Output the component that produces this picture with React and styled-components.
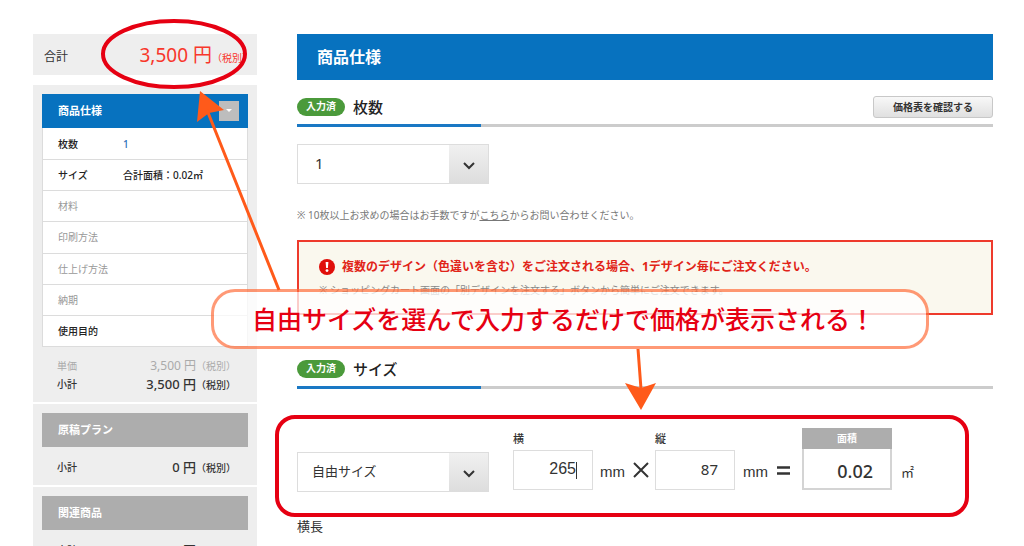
import React from "react";
import styled, { createGlobalStyle, css } from "styled-components";

const GlobalStyle = createGlobalStyle`
  *, *::before, *::after { box-sizing: border-box; }
  html { scrollbar-width: none; }
  body {
    margin: 0;
    background: #fff;
    color: #333;
    font-family: "Noto Sans", "Noto Sans CJK JP", sans-serif;
    font-size: 12px;
    line-height: 18px;
    overflow-x: hidden;
  }
  h1, h2, h3, p, dl, dd, dt { margin: 0; font-size: inherit; font-weight: inherit; }
  button, input, select { font-family: inherit; color: inherit; }
`;

const Page = styled.div`
  position: relative;
  display: grid;
  grid-template-columns: 224px minmax(0, 1fr);
  align-items: start;
  gap: 40px;
  padding: 34px 31px 0 33px;
`;

const Sidebar = styled.aside`
  display: flex;
  flex-direction: column;
  gap: 2px;
`;

const TotalBar = styled.div`
  display: flex;
  align-items: center;
  justify-content: space-between;
  height: 41px;
  margin-bottom: 8px;
  padding: 4px 5px 0 11px;
  background: #eeeeee;
`;

const TotalPrice = styled.span`
  color: #f8372b;
  font-size: 19px;
  line-height: 24px;
`;

const Tax = styled.small`
  font-size: 10px;
`;

const Panel = styled.section`
  padding: 9px;
  background: #eeeeee;
`;

const PanelHead = styled.h2`
  display: flex;
  align-items: center;
  justify-content: space-between;
  height: 34px;
  padding: 0 9px 0 16px;
  color: #fff;
  font-size: 11px;
  font-weight: 700;
  background: ${(p) => (p.$active ? "#0772bf" : "#adadad")};
`;

const Toggle = styled.button`
  display: grid;
  place-items: center;
  width: 20px;
  height: 20px;
  padding: 0;
  border: 0;
  background: #bdbdbd;
`;

const SpecTable = styled.dl`
  display: grid;
  grid-auto-rows: 1fr;
  min-height: 219px;
  border: 1px solid #dcdcdc;
  border-top: 0;
  background: #fff;
`;

const SpecRow = styled.div`
  display: grid;
  grid-template-columns: 65px 1fr;
  align-items: center;
  padding-left: 15px;
  font-size: 10px;
  font-weight: ${(p) => (p.$muted ? 400 : 500)};
  color: ${(p) => (p.$muted ? "#999" : "#222")};
  & + & { border-top: 1px solid #dcdcdc; }
`;

const SpecValue = styled.dd`
  color: ${(p) => (p.$link ? "#2a6fb8" : "inherit")};
`;

const Sums = styled.div`
  padding: ${(p) => p.$top}px 12px 0 15px;
`;

const SumRow = styled.div`
  display: flex;
  align-items: center;
  justify-content: space-between;
  height: 18px;
  font-size: 10px;
  font-weight: ${(p) => (p.$muted ? 400 : 500)};
  color: ${(p) => (p.$muted ? "#aaa" : "#333")};
`;

const SumPrice = styled.span`
  font-size: ${(p) => (p.$muted ? 12 : 13)}px;
`;

const Main = styled.main`
  min-width: 0;
`;

const MainHead = styled.h1`
  height: 46px;
  padding-left: 20px;
  color: #fff;
  font-size: 16px;
  font-weight: 700;
  line-height: 46px;
  background: #0772bf;
`;

const SectionHead = styled.div`
  position: relative;
  display: flex;
  align-items: center;
  gap: 8px;
  height: 31px;
  margin-top: ${(p) => p.$top}px;
  padding-bottom: 6px;
  border-bottom: 3px solid #cccccc;
  &::after {
    content: "";
    position: absolute;
    left: 0;
    bottom: -3px;
    width: 184px;
    height: 3px;
    background: #1a78c4;
  }
`;

const Badge = styled.span`
  width: 48px;
  height: 18px;
  border-radius: 9px;
  color: #fff;
  font-size: 10px;
  font-weight: 700;
  line-height: 17px;
  text-align: center;
  background: #4b9a3b;
`;

const SectionTitle = styled.h2`
  font-size: 15px;
  font-weight: 500;
  color: #222;
`;

const PriceButton = styled.button`
  flex: none;
  width: 120px;
  height: 22px;
  margin-left: auto;
  padding: 0;
  border: 1px solid #c8c8c8;
  border-radius: 3px;
  background: linear-gradient(#f8f8f8, #e0e0e0);
  font-size: 10px;
  font-weight: 700;
  line-height: 18px;
`;

const SelectBox = styled.div`
  position: relative;
  flex: none;
  width: 192px;
  height: 40px;
  margin-top: ${(p) => p.$top || 0}px;
  border: 1px solid #dddddd;
  background: linear-gradient(#f0f0f0, #dddddd) right / 39px 100% no-repeat #fff;
  svg {
    position: absolute;
    right: 13px;
    top: 16px;
    pointer-events: none;
  }
`;

const Select = styled.select`
  width: 100%;
  height: 100%;
  padding: 0 40px 2px ${(p) => p.$inset}px;
  border: 0;
  outline: 0;
  appearance: none;
  background: transparent;
  font-size: ${(p) => p.$size}px;
`;

const Note = styled.p`
  margin-top: 22px;
  color: #777;
  font-size: 10px;
  a { color: inherit; }
`;

const Alert = styled.div`
  min-height: 75px;
  margin-top: 16px;
  padding: 16px 20px 0;
  border: 2px solid #ee3a2c;
  background: #faf8ee;
`;

const AlertTitle = styled.p`
  display: flex;
  align-items: center;
  gap: 7px;
  color: #e12418;
  font-weight: 700;
`;

const AlertText = styled.p`
  margin-top: 5px;
  color: #888;
  font-size: 10px;
`;

const SizeForm = styled.div`
  position: relative;
  display: flex;
  align-items: flex-end;
  height: 102px;
  margin-top: 26px;
  padding-bottom: 25px;
  &::after {
    content: "";
    position: absolute;
    inset: 0 24px 0 -22px;
    border: 4px solid #e60012;
    border-radius: 20px;
    pointer-events: none;
  }
`;

const Field = styled.div`
  display: flex;
  flex-direction: column;
  gap: 2px;
  flex: none;
  width: 80px;
  margin-left: ${(p) => p.$gap}px;
  padding-bottom: 2px;
  label { font-size: 11px; font-weight: 500; }
`;

const Num = styled.input`
  width: 100%;
  height: 40px;
  padding: 0 ${(p) => p.$end}px 2px 4px;
  border: 1px solid #dddddd;
  outline: 0;
  font-size: ${(p) => (p.$plain ? 16 : 15)}px;
  text-align: right;
  ${(p) => p.$plain && css`font-family: "Liberation Sans", sans-serif;`}
`;

const Caret = styled.span`
  position: absolute;
  left: 279px;
  bottom: 38px;
  width: 1px;
  height: 17px;
  background: #333;
`;

const Unit = styled.span`
  height: 40px;
  line-height: 40px;
  margin-left: ${(p) => p.$gap}px;
  font-family: ${(p) => (p.$cjk ? "inherit" : '"Liberation Sans", sans-serif')};
  font-size: ${(p) => (p.$cjk ? 13 : 15)}px;
`;

const Sign = styled.svg`
  flex: none;
  margin: 0 0 ${(p) => p.$bottom}px ${(p) => p.$gap}px;
`;

const Area = styled.div`
  flex: none;
  width: 90px;
  height: 62px;
  margin: 0 0 2px 12px;
  border: 2px solid #d4d4d4;
  border-top: 0;
`;

const AreaHead = styled.div`
  height: 21px;
  margin: 0 -2px;
  color: #fff;
  font-size: 10px;
  font-weight: 700;
  line-height: 20px;
  text-align: center;
  background: #adadad;
`;

const AreaValue = styled.output`
  display: block;
  padding-right: 17px;
  font-size: 18px;
  font-weight: 500;
  line-height: 44px;
  text-align: right;
`;

const Orientation = styled.p`
  font-size: 13px;
`;

const Callout = styled.p`
  position: absolute;
  left: 211px;
  top: 289px;
  z-index: 2;
  width: 718px;
  height: 60px;
  padding-left: 38px;
  border: 3px solid rgba(255, 110, 60, 0.7);
  border-radius: 24px;
  color: #e60012;
  font-size: 25px;
  font-weight: 500;
  line-height: 54px;
  white-space: nowrap;
  background: rgba(255, 255, 255, 0.75);
  background-clip: padding-box;
`;

const Marks = styled.svg`
  position: absolute;
  left: 0;
  top: 0;
  z-index: 3;
  pointer-events: none;
`;

const Chevron = () => (
  <svg width="12" height="9" viewBox="0 0 12 9" aria-hidden="true">
    <path d="M1 2l5 5 5-5" fill="none" stroke="#333" strokeWidth="2" />
  </svg>
);

const rows = [
  { name: "枚数", value: "1", link: true },
  { name: "サイズ", value: "合計面積：0.02㎡" },
  { name: "材料", muted: true },
  { name: "印刷方法", muted: true },
  { name: "仕上げ方法", muted: true },
  { name: "納期", muted: true },
  { name: "使用目的" },
];

const Sum = ({ label, price, muted }) => (
  <SumRow $muted={muted}>
    <span>{label}</span>
    <SumPrice $muted={muted}>
      {price} 円<Tax>（税別）</Tax>
    </SumPrice>
  </SumRow>
);

const Section = ({ title, top, children }) => (
  <SectionHead $top={top}>
    <Badge>入力済</Badge>
    <SectionTitle>{title}</SectionTitle>
    {children}
  </SectionHead>
);

export default function App() {
  return (
    <>
      <GlobalStyle />
      <Page lang="ja">
        <Sidebar>
          <TotalBar>
            <span>合計</span>
            <TotalPrice>
              3,500 円<Tax>（税別）</Tax>
            </TotalPrice>
          </TotalBar>
          <Panel>
            <PanelHead $active>
              商品仕様
              <Toggle type="button" aria-label="開閉">
                <svg width="6" height="4" viewBox="0 0 6 4" aria-hidden="true">
                  <path d="M0 0h6L3 3z" fill="#fff" />
                </svg>
              </Toggle>
            </PanelHead>
            <SpecTable>
              {rows.map((r) => (
                <SpecRow key={r.name} $muted={r.muted}>
                  <dt>{r.name}</dt>
                  <SpecValue $link={r.link}>{r.value}</SpecValue>
                </SpecRow>
              ))}
            </SpecTable>
            <Sums $top={10}>
              <Sum label="単価" price="3,500" muted />
              <Sum label="小計" price="3,500" />
            </Sums>
          </Panel>
          <Panel>
            <PanelHead>原稿プラン</PanelHead>
            <Sums $top={11}>
              <Sum label="小計" price="0" />
            </Sums>
          </Panel>
          <Panel>
            <PanelHead>関連商品</PanelHead>
            <Sums $top={11}>
              <Sum label="小計" price="0" />
            </Sums>
          </Panel>
        </Sidebar>

        <Main>
          <MainHead>商品仕様</MainHead>
          <Section title="枚数" top={16}>
            <PriceButton type="button">価格表を確認する</PriceButton>
          </Section>
          <SelectBox $top={17}>
            <Select $inset={17} $size={15} aria-label="枚数" defaultValue="1">
              <option>1</option>
            </Select>
            <Chevron />
          </SelectBox>
          <Note>
            ※ 10枚以上お求めの場合はお手数ですが<a href="#contact">こちら</a>からお問い合わせください。
          </Note>
          <Alert>
            <AlertTitle>
              <svg width="16" height="16" viewBox="0 0 16 16" aria-hidden="true">
                <circle cx="8" cy="8" r="8" fill="#e00f0a" />
                <path d="M6.6 3h2.8l-.5 6H7.100z" fill="#fff" />
                <circle cx="8" cy="11.600" r="1.400" fill="#fff" />
              </svg>
              複数のデザイン（色違いを含む）をご注文される場合、1デザイン毎にご注文ください。
            </AlertTitle>
            <AlertText>
              ※ ショッピングカート画面の「別デザインを注文する」ボタンから簡単にご注文できます。
            </AlertText>
          </Alert>
          <Section title="サイズ" top={43} />
          <SizeForm>
            <SelectBox>
              <Select $inset={14} $size={13} aria-label="サイズ" defaultValue="自由サイズ">
                <option>自由サイズ</option>
              </Select>
              <Chevron />
            </SelectBox>
            <Field $gap={24}>
              <label htmlFor="w">横</label>
              <Num id="w" defaultValue="265" $end={16} $plain />
            </Field>
            <Caret />
            <Unit $gap={7}>mm</Unit>
            <Sign $gap={8} $bottom={14} width="16" height="16" viewBox="0 0 16 16" aria-hidden="true">
              <path d="M1 1l14 14M15 1L1 15" stroke="#333" strokeWidth="2" />
            </Sign>
            <Field $gap={6}>
              <label htmlFor="h">縦</label>
              <Num id="h" defaultValue="87" $end={16} />
            </Field>
            <Unit $gap={8}>mm</Unit>
            <Sign $gap={9} $bottom={17} width="13" height="9" viewBox="0 0 13 9" aria-hidden="true">
              <path d="M0 1.500h13M0 7.500h13" stroke="#333" strokeWidth="2.500" />
            </Sign>
            <Area>
              <AreaHead>面積</AreaHead>
              <AreaValue>0.02</AreaValue>
            </Area>
            <Unit $gap={9} $cjk>㎡</Unit>
          </SizeForm>
          <Orientation>横長</Orientation>
        </Main>

        <Callout>自由サイズを選んで入力するだけで価格が表示される！</Callout>
        <Marks width="970" height="420" viewBox="0 0 970 420" aria-hidden="true">
          <ellipse cx="174" cy="54" rx="71" ry="33" fill="none" stroke="#e60012" strokeWidth="4" />
          <g fill="#ff5a1a">
            <path d="M200 91l24 19-15 3-12 9z" />
            <path d="M641 410l-16-27 16 5 15-5z" />
          </g>
          <path d="M279 290L207 110M638 349l3 40" stroke="#ff5a1a" strokeWidth="3" />
        </Marks>
      </Page>
    </>
  );
}
